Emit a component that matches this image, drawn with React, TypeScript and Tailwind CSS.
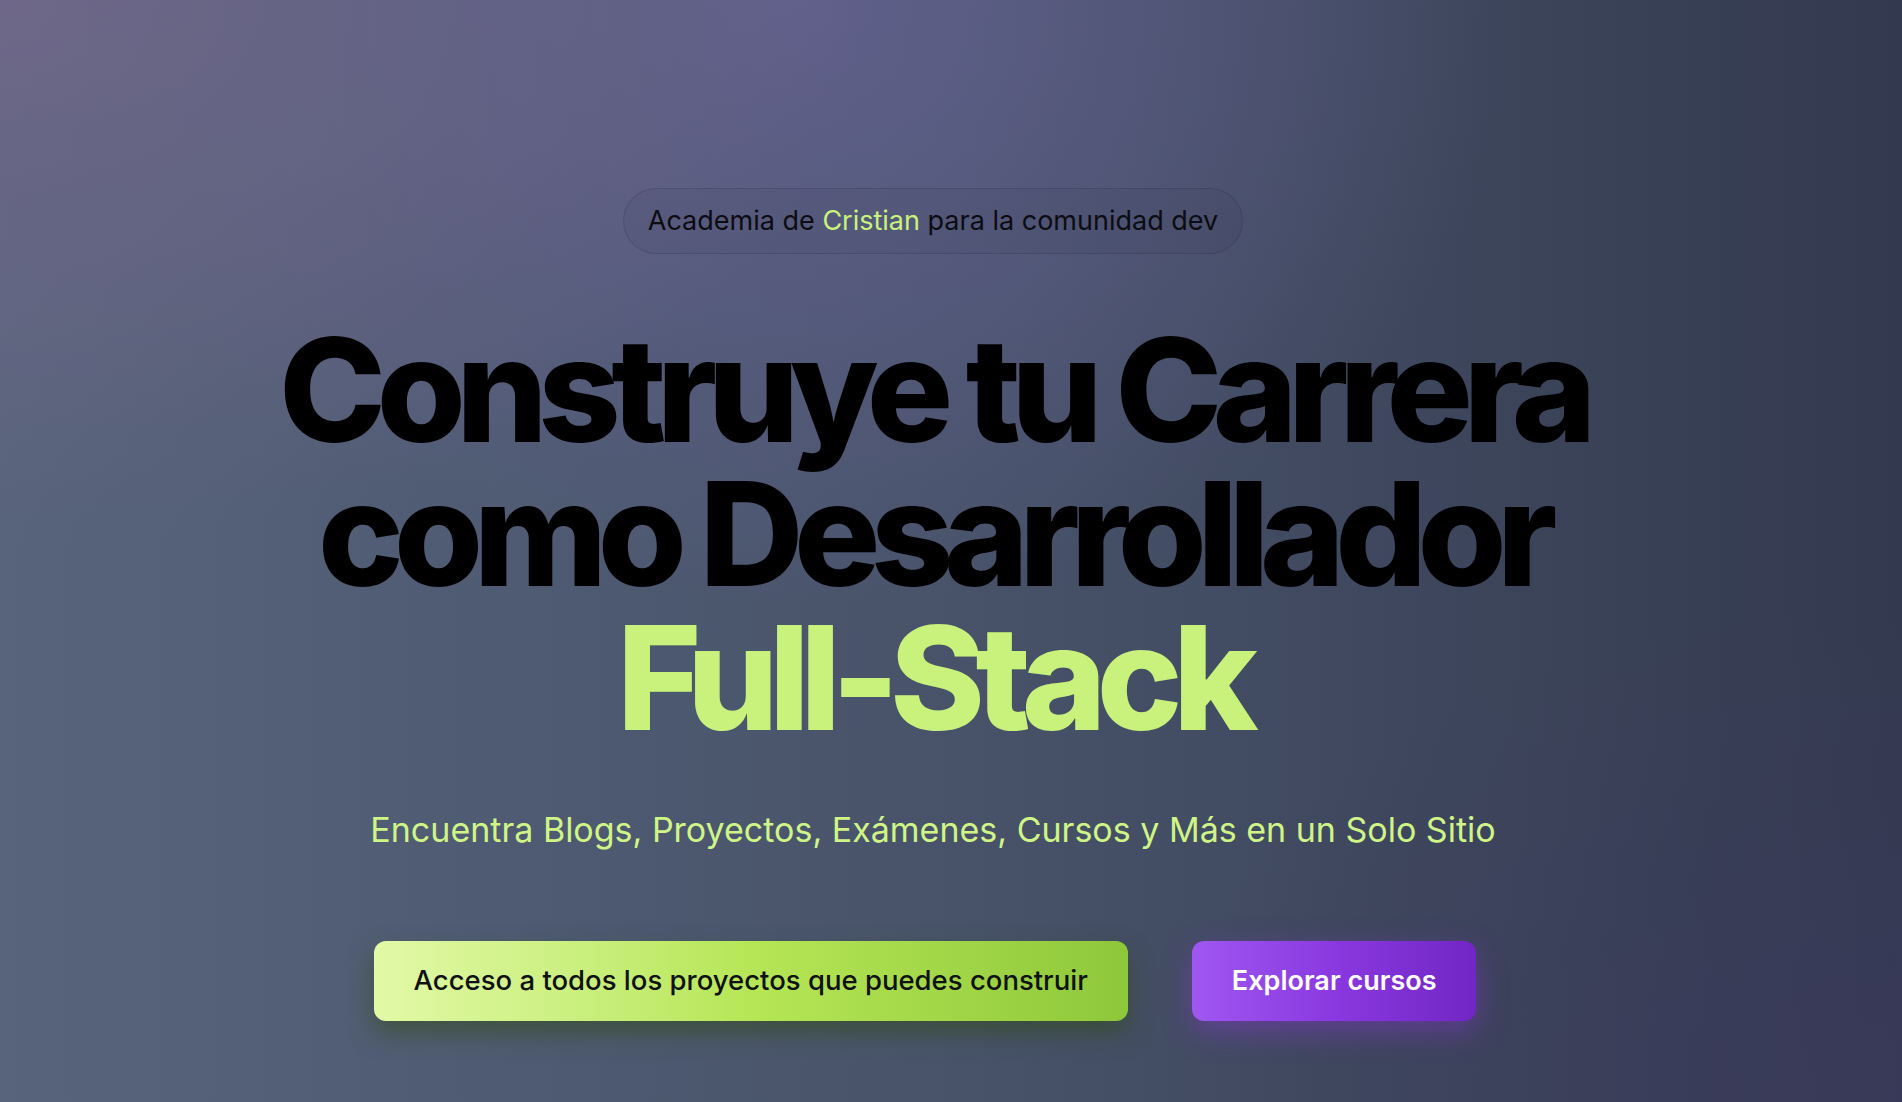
export default function App() {
  return (
    <main className="min-h-screen w-full bg-[radial-gradient(ellipse_45%_50%_at_0%_0%,rgba(116,104,140,0.8),transparent),radial-gradient(ellipse_38%_55%_at_42%_0%,rgba(100,98,145,0.85),transparent),radial-gradient(ellipse_40%_45%_at_100%_100%,rgba(60,56,96,0.5),transparent),linear-gradient(to_right,#57647b,#48536a_50%,#333a4f)] font-['Inter','Noto_Sans',sans-serif]">
      <div className="flex flex-col items-center pr-9 pt-[188px] pb-20">
        {/* badge */}
        <div className="rounded-full border border-slate-900/15 bg-slate-900/5 px-6 py-4 text-[27px] leading-8 text-[#0c0c12]">
          Academia de <span className="text-[#c9f27c]">Cristian</span> para la comunidad dev
        </div>

        <h1 className="mt-16 text-center text-[144px] font-extrabold leading-[144px] tracking-[-0.066em] text-black">
          Construye tu Carrera
          <br />
          como Desarrollador
          <br />
          <span className="text-[#c9f27c]">Full-Stack</span>
        </h1>

        <p className="mt-[60px] text-[34px] leading-10 text-[#cff586]">
          Encuentra Blogs, Proyectos, Exámenes, Cursos y Más en un Solo Sitio
        </p>

        <div className="mt-[91px] flex items-center gap-16 pr-4">
          <button className="h-[80px] rounded-xl bg-linear-to-r from-[#e2f9a6] via-[#b6e656] to-[#8ec83a] px-10 text-[27.5px] font-medium text-[#0f1115] shadow-[0_12px_24px_rgba(50,75,20,0.55)]">
            Acceso a todos los proyectos que puedes construir
          </button>
          <button className="h-[80px] rounded-xl bg-linear-to-r from-[#a057f1] via-[#8a38e0] to-[#7226c4] px-10 text-[27px] font-semibold text-white shadow-[0_10px_30px_rgba(140,50,220,0.45)]">
            Explorar cursos
          </button>
        </div>
      </div>
    </main>
  );
}
